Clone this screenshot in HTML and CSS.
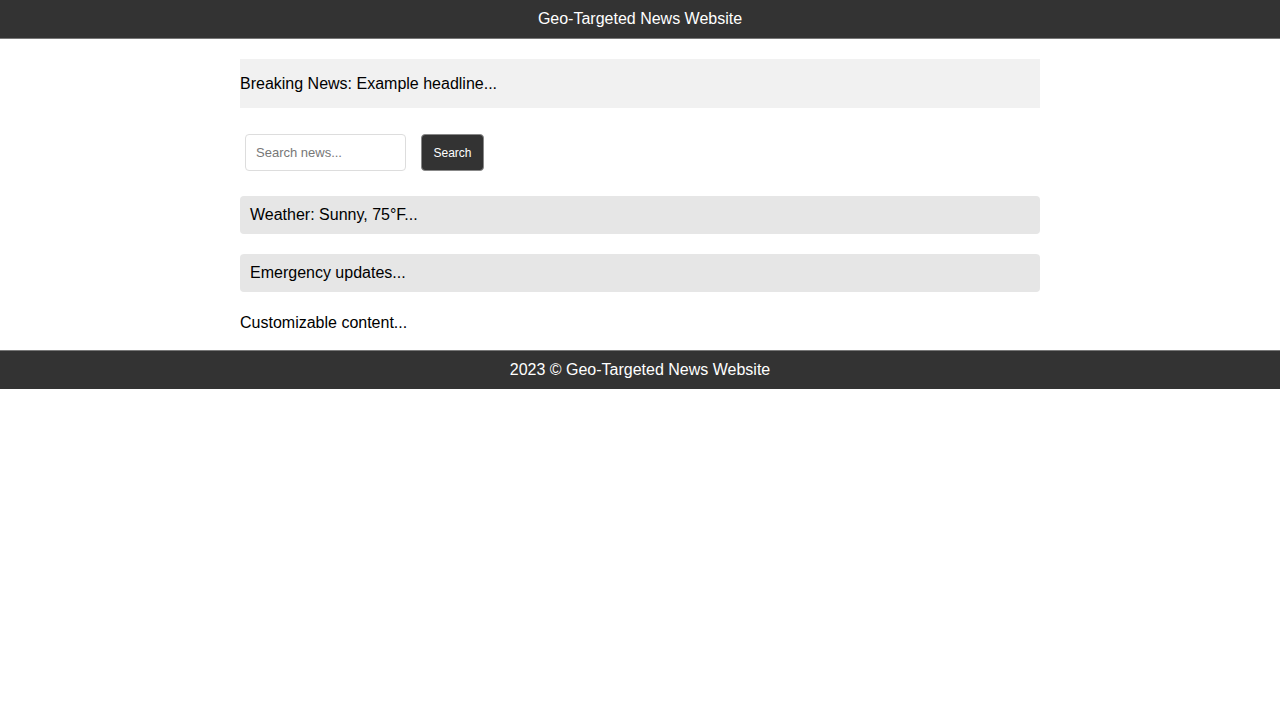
FILE: index.html
```html
<!DOCTYPE html>
<html lang="en">
<head>
<meta charset="utf-8">
<title>Geo-Targeted News Website</title>
<link rel="stylesheet" href="styles.css">
</head>
<body>
<header class="site-header">Geo-Targeted News Website</header>
<main class="container">
  <div class="breaking">Breaking News: Example headline...</div>
  <form class="search" onsubmit="return false">
    <input class="search-input" type="text" placeholder="Search news...">
    <button class="search-btn" type="submit">Search</button>
  </form>
  <div class="panel">Weather: Sunny, 75°F...</div>
  <div class="panel">Emergency updates...</div>
  <div class="custom">Customizable content...</div>
</main>
<footer class="site-footer">2023 © Geo-Targeted News Website</footer>
</body>
</html>
```
FILE: styles.css
```css
* { box-sizing: border-box; }
html, body { margin: 0; padding: 0; background: #fff; }
body {
  font-family: "Liberation Sans", Arial, sans-serif;
  font-size: 16px;
  color: #000;
}
.site-header {
  background: #333;
  color: #fff;
  text-align: center;
  height: 39px;
  line-height: 38px;
  border-bottom: 1px solid #777;
}
.container {
  width: 800px;
  margin: 0 auto;
  padding-top: 20px;
  display: flex;
  flex-direction: column;
}
.breaking {
  background: #f1f1f1;
  height: 49px;
  display: flex;
  align-items: center;
  padding-top: 1px;
}
.search {
  display: flex;
  align-items: center;
  gap: 15px;
  margin: 26px 0 25px 5px;
}
.search-input {
  width: 161px;
  height: 37px;
  border: 1px solid #ddd;
  border-radius: 4px;
  padding: 0 10px;
  font-family: "Liberation Sans", Arial, sans-serif;
  font-size: 13px;
  color: #333;
}
.search-input::placeholder { color: #777; }
.search-btn {
  width: 63px;
  height: 37px;
  background: #333;
  color: #fff;
  border: 1px solid #888;
  border-radius: 4px;
  font-family: "Liberation Sans", Arial, sans-serif;
  font-size: 12px;
  padding: 0;
}
.panel {
  background: #e6e6e6;
  border-radius: 4px;
  height: 38px;
  line-height: 38px;
  padding-left: 10px;
  margin-bottom: 20px;
}
.custom {
  height: 20px;
  line-height: 18px;
  padding-top: 2px;
  margin-bottom: 18px;
}
.site-footer {
  background: #333;
  color: #fff;
  text-align: center;
  border-top: 1px solid #777;
  height: 39px;
  line-height: 37px;
}
```
